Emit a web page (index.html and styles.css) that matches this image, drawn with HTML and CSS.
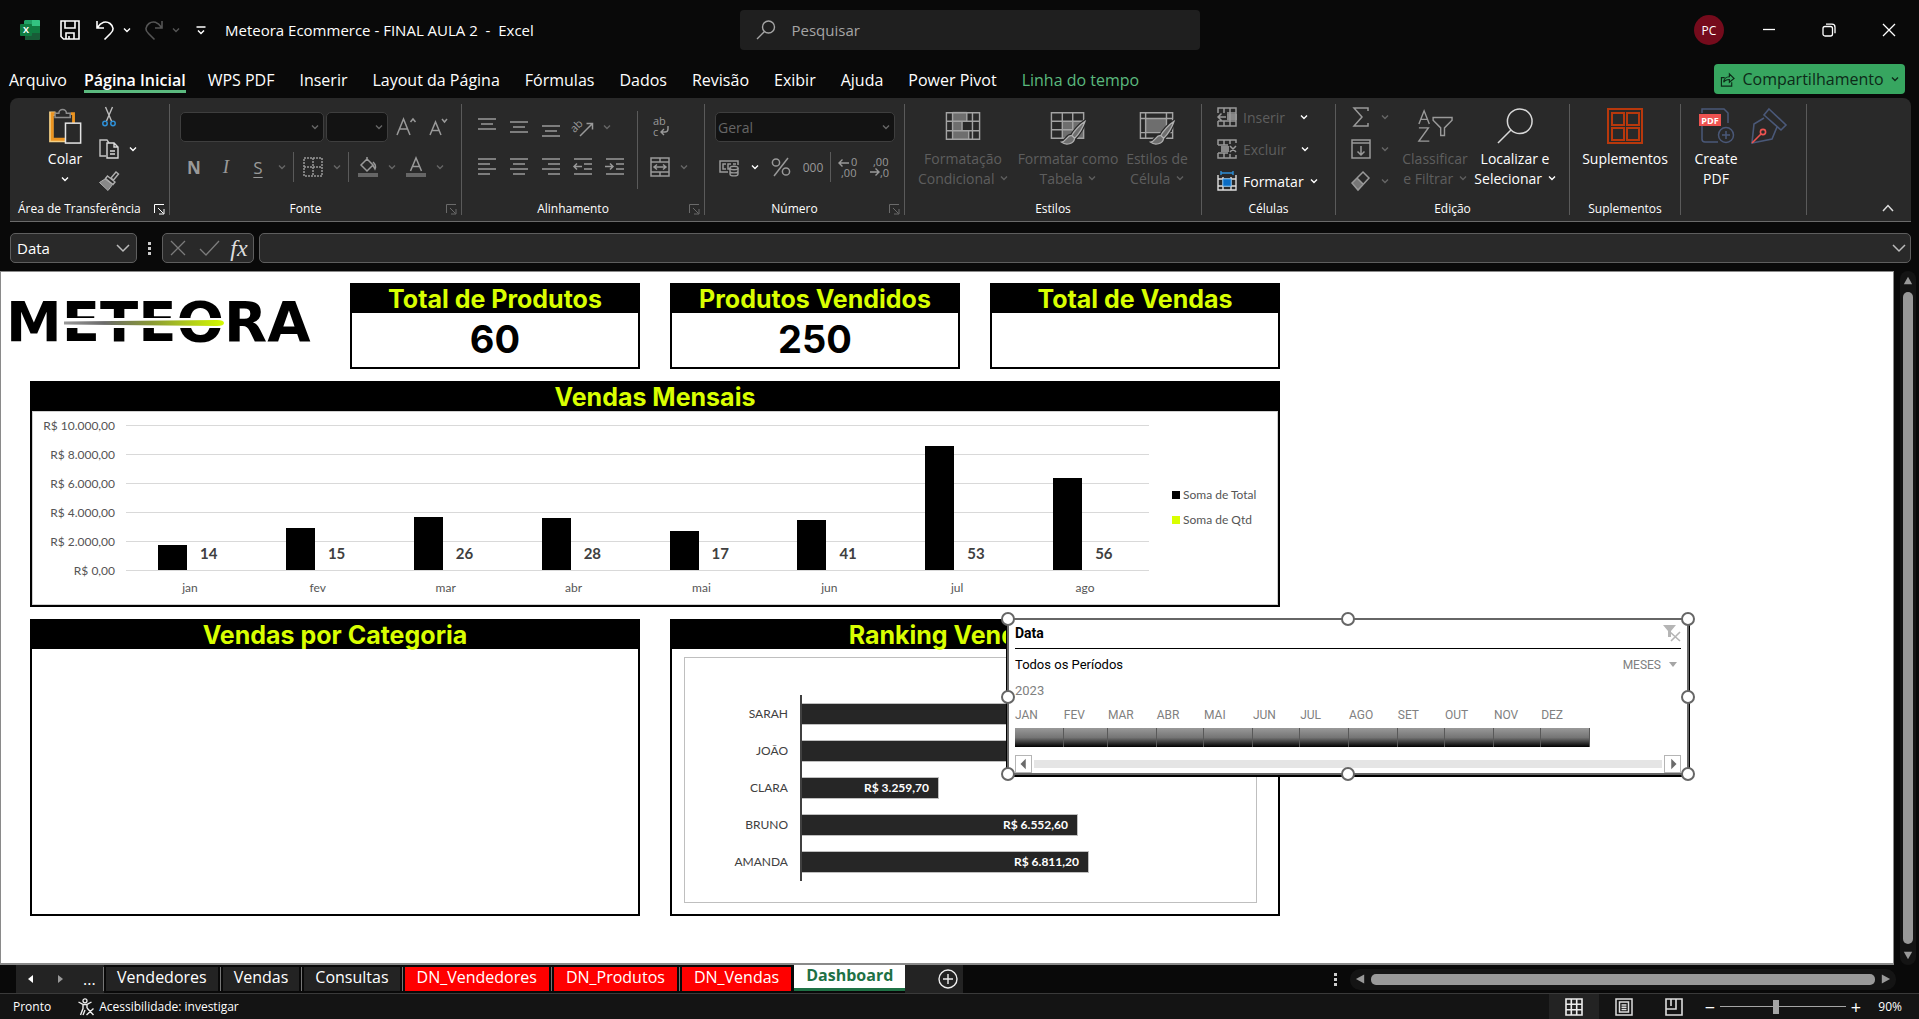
FILE: index.html
```html
<!DOCTYPE html>
<html lang="pt-BR">
<head>
<meta charset="utf-8">
<title>Meteora Ecommerce - FINAL AULA 2 - Excel</title>
<link rel="stylesheet" href="styles.css">
</head>
<body>
<svg class="sprite" aria-hidden="true">
  <symbol id="chev" viewBox="0 0 8 8"><path d="M1 2.500l3 3 3-3" fill="none" stroke="currentColor" stroke-width="1.400"/></symbol>
  <symbol id="chev-lg" viewBox="0 0 14 14"><path d="M1 4l6 6 6-6" fill="none" stroke="currentColor" stroke-width="1.500"/></symbol>
  <symbol id="launcher" viewBox="0 0 11 11"><path d="M.5 9V.5H10M4 4l5.500 5.500M10 5v5H5" fill="none" stroke="currentColor"/></symbol>
</svg>

<header class="titlebar">
  <div class="quick">
    <svg class="excel" viewBox="0 0 20 20" aria-label="Excel"><path d="M5 0h14a1 1 0 0 1 1 1v18a1 1 0 0 1-1 1H5z" fill="#185c37"/><path d="M5 0h8v7H4V1z" fill="#21a366"/><path d="M12 0h7a1 1 0 0 1 1 1v5h-8z" fill="#33c481"/><path d="M12 6h8v7h-8z" fill="#107c41"/><rect y="4" width="12" height="12" rx="1" fill="#107c41"/><text x="6" y="13" text-anchor="middle" class="excel-x">X</text></svg>
    <button class="qbtn save" aria-label="Salvar"><svg viewBox="0 0 20 20"><path d="M1 1h18v18H3.500L1 16.500zM5 1v7h10V1M6 19v-6h8v6M9 19v-3" fill="none" stroke="#fff" stroke-width="1.600"/></svg></button>
    <button class="qbtn" aria-label="Desfazer"><svg viewBox="0 0 20 20"><path d="M2 1v7h7M2.500 7.500C6 2 11 .5 15 3.500s4 7 .5 10L9.500 19.500" fill="none" stroke="#fff" stroke-width="1.600"/></svg></button>
    <button class="drop" aria-label="Opções de desfazer"><svg><use href="#chev"/></svg></button>
    <button class="qbtn off" aria-label="Refazer"><svg viewBox="0 0 20 20"><path d="M18 1v7h-7M17.500 7.500C14 2 9 .5 5 3.500s-4 7-.5 10L10.500 19.500" fill="none" stroke="currentColor" stroke-width="1.600"/></svg></button>
    <button class="drop off" aria-label="Opções de refazer"><svg><use href="#chev"/></svg></button>
    <button class="qbtn custom" aria-label="Personalizar"><svg viewBox="0 0 20 20"><path d="M5.500 7h9M7 10.500l3 3 3-3" fill="none" stroke="#fff" stroke-width="1.500"/></svg></button>
    <span class="doc">Meteora Ecommerce - FINAL AULA 2&nbsp; -&nbsp; Excel</span>
  </div>
  <label class="search"><svg viewBox="0 0 20 20"><path d="M12.500 1a6 6 0 1 1 0 12 6 6 0 0 1 0-12zM8.500 11.500L1 19" fill="none" stroke="#a5a5a5" stroke-width="1.400"/></svg><input type="text" placeholder="Pesquisar" aria-label="Pesquisar"></label>
  <div class="window">
    <button class="avatar" aria-label="Conta">PC</button>
    <button class="win" aria-label="Minimizar"><svg viewBox="0 0 14 14"><path d="M1 6.500h12" stroke="#fff" stroke-width="1.300"/></svg></button>
    <button class="win" aria-label="Restaurar"><svg viewBox="0 0 14 14"><rect x="1" y="3.500" width="9.500" height="9.500" rx="2" fill="none" stroke="#fff" stroke-width="1.300"/><path d="M4 1.200h6a3 3 0 0 1 3 3v6" fill="none" stroke="#fff" stroke-width="1.300"/></svg></button>
    <button class="win" aria-label="Fechar"><svg viewBox="0 0 14 14"><path d="M1 1l12 12M13 1L1 13" stroke="#fff" stroke-width="1.300"/></svg></button>
  </div>
</header>

<nav class="menu">
  <button>Arquivo</button><button class="current">Página Inicial</button><button>WPS PDF</button><button>Inserir</button><button>Layout da Página</button><button>Fórmulas</button><button>Dados</button><button>Revisão</button><button>Exibir</button><button>Ajuda</button><button>Power Pivot</button><button class="context">Linha do tempo</button>
  <button class="share"><svg viewBox="0 0 16 16"><path d="M5 6H1.500v9h11v-4M4 11c0-4 3-6 6-6V2l5 5-5 4V8C7 8 5 9 4 11z" fill="none" stroke="#0d2a18" stroke-width="1.200"/></svg>Compartilhamento<svg class="c"><use href="#chev"/></svg></button>
</nav>

<section class="ribbon" aria-label="Faixa de opções">
  <div class="group g-clip">
    <div class="tools">
      <button class="big paste"><svg viewBox="0 0 36 38"><path d="M8 6H3.500v28H19" fill="none" stroke="#f3cf85" stroke-width="4.500"/><path d="M8 6H4.500v27H19M24 6h3v10" fill="none" stroke="#ec9420" stroke-width="3"/><path d="M7.500 10V5.500h4a4 4 0 0 1 8 0h4V10z" fill="#292929" stroke="#8d8d8d" stroke-width="1.600"/><rect x="18.500" y="16" width="16" height="21" fill="#292929" stroke="#e3e3e3" stroke-width="1.600"/></svg><span>Colar</span><svg class="c"><use href="#chev"/></svg></button>
      <div class="stack">
        <button class="t" aria-label="Recortar"><svg viewBox="0 0 20 20"><path d="M6.500 0l6 14M13.500 0l-6 14" stroke="#bdbdbd" stroke-width="1.400"/><circle cx="6" cy="16.500" r="2.200" fill="none" stroke="#2e8fd6" stroke-width="1.500"/><circle cx="14" cy="16.500" r="2.200" fill="none" stroke="#2e8fd6" stroke-width="1.500"/></svg></button>
        <div class="row"><button class="t" aria-label="Copiar"><svg viewBox="0 0 20 20"><path d="M7 17H1V1h7l2 3" fill="none" stroke="#c4c4c4" stroke-width="1.400"/><path d="M8 4h7l4 4v11H8zM15 4v4h4M11 12h5M11 15h5" fill="none" stroke="#d8d8d8" stroke-width="1.400"/></svg></button><button class="drop" aria-label="Opções de copiar"><svg><use href="#chev"/></svg></button></div>
        <button class="t" aria-label="Pincel de Formatação"><svg viewBox="0 0 20 20"><path d="M12 7l5-6 2.500 2-5 6z" fill="none" stroke="#b0b0b0" stroke-width="1.400"/><path d="M8.500 5l7.500 6-2 2.500L6.500 7.500z" fill="#292929" stroke="#b0b0b0" stroke-width="1.400"/><path d="M6 8l-5.500 3.500L9 19.500l4.500-6z" fill="#888" stroke="#b0b0b0"/></svg></button>
      </div>
    </div>
    <div class="caption">Área de Transferência<button class="launch on" aria-label="Abrir Área de Transferência"><svg><use href="#launcher"/></svg></button></div>
  </div>

  <div class="group g-font off">
    <div class="tools lines">
      <div class="row">
        <span class="combo font-name"><select aria-label="Fonte"><option></option></select><svg><use href="#chev"/></svg></span>
        <span class="combo font-size"><select aria-label="Tamanho"><option></option></select><svg><use href="#chev"/></svg></span>
        <button class="t" aria-label="Aumentar fonte"><svg viewBox="0 0 20 20"><path d="M1 18L7.500 2 14 18M3.500 12h8M14.500 5l2.500-3 2.500 3" fill="none" stroke="currentColor" stroke-width="1.500"/></svg></button>
        <button class="t" aria-label="Diminuir fonte"><svg viewBox="0 0 20 20"><path d="M2 18L7.500 5 13 18M4 13.500h7M14 2l2.500 3L19 2" fill="none" stroke="currentColor" stroke-width="1.500"/></svg></button>
      </div>
      <div class="row">
        <button class="t ltr b">N</button><button class="t ltr i">I</button><button class="t ltr u">S</button><button class="drop" aria-label="Sublinhado"><svg><use href="#chev"/></svg></button><i class="sep"></i>
        <button class="t" aria-label="Bordas"><svg viewBox="0 0 20 20"><path d="M1 1h18v18H1zM10 1v18M1 10h18" fill="none" stroke="currentColor" stroke-width="1.500" stroke-dasharray="2 1"/></svg></button><button class="drop" aria-label="Opções de bordas"><svg><use href="#chev"/></svg></button><i class="sep"></i>
        <button class="t" aria-label="Cor de Preenchimento"><svg viewBox="0 0 20 20"><path d="M9 2l6 6-6 6-6-6zM9 2V0M15 5c2 2 3 5 2 7-1-2-2-3-2-4" fill="none" stroke="currentColor" stroke-width="1.500"/><path d="M0 16h20v4H0z" fill="#666"/></svg></button><button class="drop" aria-label="Opções de preenchimento"><svg><use href="#chev"/></svg></button>
        <button class="t" aria-label="Cor da Fonte"><svg viewBox="0 0 20 20"><path d="M4.500 14L10 1l5.500 13M6.500 9.500h7" fill="none" stroke="currentColor" stroke-width="1.500"/><path d="M0 16h20v4H0z" fill="#666"/></svg></button><button class="drop" aria-label="Opções de cor"><svg><use href="#chev"/></svg></button>
      </div>
    </div>
    <div class="caption">Fonte<button class="launch" aria-label="Abrir Fonte"><svg><use href="#launcher"/></svg></button></div>
  </div>

  <div class="group g-align off">
    <div class="tools">
      <div class="lines">
        <div class="row">
          <button class="t" aria-label="Alinhar em Cima"><svg viewBox="0 0 20 20"><path d="M1 2h18M4 7h12M1 12h18" stroke="currentColor" stroke-width="1.500"/></svg></button>
          <button class="t" aria-label="Alinhar no Meio"><svg viewBox="0 0 20 20"><path d="M1 5h18M4 10h12M1 15h18" stroke="currentColor" stroke-width="1.500"/></svg></button>
          <button class="t" aria-label="Alinhar Embaixo"><svg viewBox="0 0 20 20"><path d="M1 9h18M4 14h12M1 19h18" stroke="currentColor" stroke-width="1.500"/></svg></button>
          <button class="t" aria-label="Orientação"><svg viewBox="0 0 20 20"><text x="-2" y="12" transform="rotate(-45 5 10)" class="ic-txt">ab</text><path d="M7 19L19 7M13.500 6.500H19.500v6" fill="none" stroke="currentColor" stroke-width="1.500"/></svg></button><button class="drop" aria-label="Opções de orientação"><svg><use href="#chev"/></svg></button>
        </div>
        <div class="row">
          <button class="t" aria-label="Alinhar à Esquerda"><svg viewBox="0 0 20 20"><path d="M1 2h18M1 7h12M1 12h18M1 17h12" stroke="currentColor" stroke-width="1.500"/></svg></button>
          <button class="t" aria-label="Centralizar"><svg viewBox="0 0 20 20"><path d="M1 2h18M4 7h12M1 12h18M4 17h12" stroke="currentColor" stroke-width="1.500"/></svg></button>
          <button class="t" aria-label="Alinhar à Direita"><svg viewBox="0 0 20 20"><path d="M1 2h18M7 7h12M1 12h18M7 17h12" stroke="currentColor" stroke-width="1.500"/></svg></button>
          <button class="t" aria-label="Diminuir Recuo"><svg viewBox="0 0 20 20"><path d="M1 2h18M11 7h8M11 12h8M1 17h18M9 9.500H1M4 6.500l-3 3 3 3" fill="none" stroke="currentColor" stroke-width="1.500"/></svg></button>
          <button class="t" aria-label="Aumentar Recuo"><svg viewBox="0 0 20 20"><path d="M1 2h18M11 7h8M11 12h8M1 17h18M0 9.500h8M5 6.500l3 3-3 3" fill="none" stroke="currentColor" stroke-width="1.500"/></svg></button>
        </div>
      </div>
      <i class="sep tall"></i>
      <div class="lines">
        <div class="row"><button class="t" aria-label="Quebrar Texto Automaticamente"><svg viewBox="0 0 20 20"><text x="3" y="8" class="ic-txt">ab</text><text x="3" y="19" class="ic-txt">c</text><path d="M18 9v3q0 3-3 3h-4M14 12l-3 3 3 3" fill="none" stroke="currentColor" stroke-width="1.400"/></svg></button></div>
        <div class="row"><button class="t" aria-label="Mesclar e Centralizar"><svg viewBox="0 0 20 20"><path d="M1 1h18v18H1zM1 5h18M1 15h18M10 1v4M10 15v4M4 10h12M7 7.500L4 10l3 2.500M13 7.500l3 2.500-3 2.500" fill="none" stroke="currentColor" stroke-width="1.500"/></svg></button><button class="drop" aria-label="Opções de mesclar"><svg><use href="#chev"/></svg></button></div>
      </div>
    </div>
    <div class="caption">Alinhamento<button class="launch" aria-label="Abrir Alinhamento"><svg><use href="#launcher"/></svg></button></div>
  </div>

  <div class="group g-num off">
    <div class="tools lines">
      <div class="row"><span class="combo format"><select aria-label="Formato de Número"><option>Geral</option></select><svg><use href="#chev"/></svg></span></div>
      <div class="row">
        <button class="t" aria-label="Formato de Contabilização"><svg viewBox="0 0 20 20"><path d="M9 15H1V4h18v4M7 7H4v5h3M12 7H9v5h2M14 7h3" fill="none" stroke="currentColor" stroke-width="1.500"/><path d="M11 11v6c0 2.500 8 2.500 8 0v-6M11 14c0 2.500 8 2.500 8 0" fill="#292929" stroke="currentColor" stroke-width="1.400"/><ellipse cx="15" cy="11" rx="4" ry="1.800" fill="#292929" stroke="currentColor" stroke-width="1.400"/></svg></button><button class="drop on" aria-label="Opções de moeda"><svg><use href="#chev"/></svg></button>
        <button class="t" aria-label="Porcentagem"><svg viewBox="0 0 20 20"><path d="M17 1L3 19" stroke="currentColor" stroke-width="1.500"/><circle cx="5" cy="5.500" r="3.600" fill="none" stroke="currentColor" stroke-width="1.500"/><circle cx="15" cy="14.500" r="3.600" fill="none" stroke="currentColor" stroke-width="1.500"/></svg></button>
        <button class="t zeros">000</button><i class="sep"></i>
        <button class="t" aria-label="Aumentar Casas Decimais"><svg viewBox="0 0 20 20"><path d="M11 6H1M4.500 2.500L1 6l3.500 3.500" fill="none" stroke="currentColor" stroke-width="1.400"/><text x="13" y="9" class="ic-num">0</text><text x="3" y="20" class="ic-num">,00</text></svg></button>
        <button class="t" aria-label="Diminuir Casas Decimais"><svg viewBox="0 0 20 20"><text x="3" y="9" class="ic-num">,00</text><path d="M0 15h9M5.500 11.500L9 15l-3.500 3.500" fill="none" stroke="currentColor" stroke-width="1.400"/><text x="10" y="20" class="ic-num">,0</text></svg></button>
      </div>
    </div>
    <div class="caption">Número<button class="launch" aria-label="Abrir Número"><svg><use href="#launcher"/></svg></button></div>
  </div>

  <div class="group g-style off">
    <div class="tools">
      <button class="big dim"><svg viewBox="0 0 38 36"><path d="M8 3h15v10H8zM8 13h10v10H8zM8 23h17v9H8z" fill="#6e6e6e"/><path d="M1.500 4h35v28h-35zM8 4v28M29 4v28M1.500 13h35M1.500 23h35M23 4v9M18 13v10M25 23v9" fill="none" stroke="#a3a3a3" stroke-width="1.500"/></svg><span>Formatação<br>Condicional <svg class="c"><use href="#chev"/></svg></span></button>
      <button class="big dim mid"><svg viewBox="0 0 38 36"><path d="M13 13h22v18H13z" fill="#6e6e6e"/><path d="M1.500 4h34v27h-34zM1.500 13h34M1.500 22h34M13 4v27M24 4v27" fill="none" stroke="#a3a3a3" stroke-width="1.500"/><path d="M37 13c-5 3-12 11-14 15l3 3c4-4 9-12 11-18zM23 28c-6 0-5 6-11 7 5 4 13 2 14-4z" fill="#6e6e6e" stroke="#292929" stroke-width="4"/><path d="M37 13c-5 3-12 11-14 15l3 3c4-4 9-12 11-18zM23 28c-6 0-5 6-11 7 5 4 13 2 14-4z" fill="#6e6e6e" stroke="#b0b0b0" stroke-width="1.300"/></svg><span>Formatar como<br>Tabela <svg class="c"><use href="#chev"/></svg></span></button>
      <button class="big dim narrow"><svg viewBox="0 0 38 36"><path d="M7 10h22v15H7z" fill="#6e6e6e"/><path d="M1.500 4h34v27h-34zM1.500 10h34M1.500 25h34M7 4v27M29 4v27" fill="none" stroke="#a3a3a3" stroke-width="1.500"/><path d="M37 13c-5 3-12 11-14 15l3 3c4-4 9-12 11-18zM23 28c-6 0-5 6-11 7 5 4 13 2 14-4z" fill="#6e6e6e" stroke="#292929" stroke-width="4"/><path d="M37 13c-5 3-12 11-14 15l3 3c4-4 9-12 11-18zM23 28c-6 0-5 6-11 7 5 4 13 2 14-4z" fill="#6e6e6e" stroke="#b0b0b0" stroke-width="1.300"/></svg><span>Estilos de<br>Célula <svg class="c"><use href="#chev"/></svg></span></button>
    </div>
    <div class="caption">Estilos</div>
  </div>

  <div class="group g-cells">
    <div class="tools stack">
      <button class="line dim"><svg viewBox="0 0 20 20"><path d="M10 7h10v6H10z" fill="#888"/><path d="M1 6V1h18v18H1v-5M7 1v5M13 1v18M7 14v5M1 14h18M10 6h9M9 10H1M4.500 6.500L1 10l3.500 3.500" fill="none" stroke="#999" stroke-width="1.500"/></svg>Inserir<svg class="c on far"><use href="#chev"/></svg></button>
      <button class="line dim"><svg viewBox="0 0 20 20"><path d="M4 7h8v6H4z" fill="#888"/><path d="M1 6V1h18v3M1 14v5h18v-3M7 1v5M13 1v4M7 14v5M13 15v4M1 6h10M1 14h10M13 7l6 6M19 7l-6 6" fill="none" stroke="#999" stroke-width="1.500"/></svg>Excluir<svg class="c on far"><use href="#chev"/></svg></button>
      <button class="line"><svg viewBox="0 0 20 20"><path d="M4 0v4M16 0v4M4 2h12" stroke="#2e8fd6" stroke-width="1.400"/><path d="M1 4v15h18V4M1 8h18M1 15h18M6 6v13M14 6v13" fill="none" stroke="#ddd" stroke-width="1.400"/><path d="M6 8h8v7H6z" fill="#0a6cc4" stroke="#4aa3e8"/></svg>Formatar<svg class="c"><use href="#chev"/></svg></button>
    </div>
    <div class="caption">Células</div>
  </div>

  <div class="group g-edit">
    <div class="tools">
      <div class="stack off">
        <div class="row"><button class="t" aria-label="Soma"><svg viewBox="0 0 20 20"><path d="M17 4V1H3l8 9-8 9h14v-3" fill="none" stroke="currentColor" stroke-width="1.500"/></svg></button><button class="drop" aria-label="Opções de soma"><svg><use href="#chev"/></svg></button></div>
        <div class="row"><button class="t" aria-label="Preencher"><svg viewBox="0 0 20 20"><path d="M1 1h18v18H1zM1 4h18M10 7v9M6.500 12.500L10 16l3.500-3.500" fill="none" stroke="currentColor" stroke-width="1.500"/></svg></button><button class="drop" aria-label="Opções de preencher"><svg><use href="#chev"/></svg></button></div>
        <div class="row"><button class="t" aria-label="Limpar"><svg viewBox="0 0 20 20"><path d="M1 12l5-5 6 6-5 6z" fill="#777"/><path d="M12 1l6 6-11 12-6-7zM6 7l6 6" fill="none" stroke="currentColor" stroke-width="1.500"/></svg></button><button class="drop" aria-label="Opções de limpar"><svg><use href="#chev"/></svg></button></div>
      </div>
      <button class="big dim sort"><svg viewBox="0 0 38 36"><path d="M2 16L7.500 2 13 16M4 11h7M2 20h10L2 34h11M17 9h20v3l-8 8v8h-4v-8l-8-8z" fill="none" stroke="#999" stroke-width="1.500"/></svg><span>Classificar<br>e Filtrar <svg class="c"><use href="#chev"/></svg></span></button>
      <button class="big find"><svg viewBox="0 0 38 38"><circle cx="24" cy="14" r="13" fill="none" stroke="#d8d8d8" stroke-width="1.600"/><path d="M15 23L1 37" stroke="#d8d8d8" stroke-width="1.600"/></svg><span>Localizar e<br>Selecionar <svg class="c"><use href="#chev"/></svg></span></button>
    </div>
    <div class="caption">Edição</div>
  </div>

  <div class="group g-add">
    <div class="tools"><button class="big addin"><svg viewBox="0 0 36 36"><path d="M1 1h34v34H1zM5 5h12v12H5zM20 5h12v12H20zM5 20h12v12H5zM20 20h12v12H20z" fill="none" stroke="#b8380c" stroke-width="2"/></svg><span>Suplementos</span></button></div>
    <div class="caption">Suplementos</div>
  </div>

  <div class="group g-pdf">
    <div class="tools">
      <button class="big pdf"><svg viewBox="0 0 36 36"><path d="M4 5V1h22l4 4v10M4 18v13a3 3 0 0 0 3 3h13" fill="none" stroke="#4a5878" stroke-width="1.500"/><circle cx="28" cy="27" r="7.500" fill="none" stroke="#4a5878" stroke-width="1.500"/><path d="M28 23v8M24 27h8" stroke="#4a5878" stroke-width="1.500"/><path d="M1 6h22v12H1z" fill="#ee5350"/><text x="12" y="16" text-anchor="middle" class="pdf-txt">PDF</text></svg><span>Create<br>PDF</span></button>
      <button class="big pen" aria-label="Assinar PDF"><svg viewBox="0 0 36 36"><path d="M18 1l17 16-5 5L13 7zM13 10L3 16 1 35l20-4 5-12" fill="none" stroke="#4a5878" stroke-width="1.600"/><path d="M1 35l9-9" stroke="#ee5350" stroke-width="1.600"/><circle cx="12" cy="24" r="2.600" fill="none" stroke="#ee5350" stroke-width="1.600"/></svg></button>
    </div>
  </div>
  <button class="collapse" aria-label="Recolher a Faixa de Opções"><svg viewBox="0 0 14 14"><path d="M2 10l5-5.500 5 5.500" fill="none" stroke="#ddd" stroke-width="1.500"/></svg></button>
</section>

<section class="formula">
  <span class="namebox"><input type="text" value="Data" aria-label="Caixa de Nome"><svg><use href="#chev-lg"/></svg></span>
  <i class="dots"></i>
  <div class="fx"><button aria-label="Cancelar"><svg viewBox="0 0 20 20"><path d="M3 3l14 14M17 3L3 17" stroke="#7c7c7c" stroke-width="1.300"/></svg></button><button aria-label="Inserir"><svg viewBox="0 0 20 20"><path d="M1 11l6 6L20 3" fill="none" stroke="#7c7c7c" stroke-width="1.300"/></svg></button><button class="f" aria-label="Inserir Função">fx</button></div>
  <span class="formula-in"><input type="text" aria-label="Barra de fórmulas"><svg><use href="#chev-lg"/></svg></span>
</section>

<div class="work">
  <main class="sheet">
    <div class="dash">
      <div class="logo"><span>METEORA</span><svg viewBox="0 0 184 20" preserveAspectRatio="none"><defs><linearGradient id="comet"><stop offset="0" stop-color="#999"/><stop offset=".25" stop-color="#6a6a6a"/><stop offset=".55" stop-color="#8a9a35"/><stop offset="1" stop-color="#d4fa00"/></linearGradient></defs><path d="M0 5h184v10H0z" fill="#fff"/><path d="M0 8.500L176 7q8 0 8 3t-8 3L0 11.500z" fill="url(#comet)"/></svg></div>
      <section class="card kpi"><h2>Total de Produtos</h2><p>60</p></section>
      <section class="card kpi"><h2>Produtos Vendidos</h2><p>250</p></section>
      <section class="card kpi"><h2>Total de Vendas</h2><p></p></section>

      <section class="card monthly">
        <h2>Vendas Mensais</h2>
        <div class="mchart">
          <div class="yaxis"><span>R$ 10.000,00</span><span>R$ 8.000,00</span><span>R$ 6.000,00</span><span>R$ 4.000,00</span><span>R$ 2.000,00</span><span>R$ 0,00</span></div>
          <div class="plot">
            <div class="cols">
              <div class="col"><i style="height:25px"></i><b>14</b></div>
              <div class="col"><i style="height:42px"></i><b>15</b></div>
              <div class="col"><i style="height:53px"></i><b>26</b></div>
              <div class="col"><i style="height:52px"></i><b>28</b></div>
              <div class="col"><i style="height:39px"></i><b>17</b></div>
              <div class="col"><i style="height:50px"></i><b>41</b></div>
              <div class="col"><i style="height:124px"></i><b>53</b></div>
              <div class="col"><i style="height:92px"></i><b>56</b></div>
            </div>
            <div class="xaxis"><span>jan</span><span>fev</span><span>mar</span><span>abr</span><span>mai</span><span>jun</span><span>jul</span><span>ago</span></div>
          </div>
          <div class="legend"><span class="k">Soma de Total</span><span class="l">Soma de Qtd</span></div>
        </div>
      </section>

      <section class="card half"><h2>Vendas por Categoria</h2></section>
      <section class="card half ranking">
        <h2>Ranking Vendedores</h2>
        <div class="rchart">
          <div class="names"><span>SARAH</span><span>JOÃO</span><span>CLARA</span><span>BRUNO</span><span>AMANDA</span></div>
          <div class="bars">
            <div><i style="width:340px"></i></div>
            <div><i style="width:300px"></i></div>
            <div><i style="width:137px">R$ 3.259,70</i></div>
            <div><i style="width:276px">R$ 6.552,60</i></div>
            <div><i style="width:287px">R$ 6.811,20</i></div>
          </div>
        </div>
      </section>

      <section class="slicer" aria-label="Linha do tempo Data">
        <div class="s-head"><b>Data</b><button aria-label="Limpar Filtro"><svg viewBox="0 0 18 18"><path d="M0 1h13L8 7v6H5V7z" fill="#b5b5b5"/><path d="M7 8l10 9M17 8l-9 9" stroke="#b5b5b5" stroke-width="1.600"/></svg></button></div>
        <div class="s-period"><span>Todos os Períodos</span><button>MESES<i></i></button></div>
        <div class="s-year">2023</div>
        <div class="months"><button>JAN</button><button>FEV</button><button>MAR</button><button>ABR</button><button>MAI</button><button>JUN</button><button>JUL</button><button>AGO</button><button>SET</button><button>OUT</button><button>NOV</button><button>DEZ</button></div>
        <div class="s-scroll"><button aria-label="Anterior"><svg viewBox="0 0 16 16"><path d="M10 2v12L4 8z" fill="#6a6a6a"/></svg></button><i></i><button aria-label="Próximo"><svg viewBox="0 0 16 16"><path d="M6 2v12l6-6z" fill="#6a6a6a"/></svg></button></div>
        <i class="h tl"></i><i class="h tc"></i><i class="h tr"></i><i class="h ml"></i><i class="h mr"></i><i class="h bl"></i><i class="h bc"></i><i class="h br"></i>
      </section>
    </div>
  </main>
  <div class="vscroll"><svg viewBox="0 0 12 12"><path d="M6 1l5 9H1z" fill="#999"/></svg><i></i><svg viewBox="0 0 12 12"><path d="M6 11l5-9H1z" fill="#999"/></svg></div>
</div>

<div class="tabs">
  <div class="tabnav"><button aria-label="Folha anterior"><svg viewBox="0 0 10 10"><path d="M7 1v8L2 5z" fill="#fff"/></svg></button><button aria-label="Próxima folha"><svg viewBox="0 0 10 10"><path d="M3 1v8l5-4z" fill="#999"/></svg></button><button>...</button></div>
  <button class="tab">Vendedores</button><button class="tab">Vendas</button><button class="tab">Consultas</button><button class="tab red">DN_Vendedores</button><button class="tab red">DN_Produtos</button><button class="tab red">DN_Vendas</button><button class="tab active">Dashboard</button>
  <button class="add" aria-label="Nova planilha"><svg viewBox="0 0 20 20"><circle cx="10" cy="10" r="9" fill="none" stroke="#eee" stroke-width="1.400"/><path d="M10 5v10M5 10h10" stroke="#eee" stroke-width="1.400"/></svg></button>
  <i class="dots"></i>
  <div class="hscroll"><svg viewBox="0 0 12 12"><path d="M1 6l9-5v10z" fill="#999"/></svg><i></i><svg viewBox="0 0 12 12"><path d="M11 6L2 1v10z" fill="#999"/></svg></div>
</div>

<footer class="status">
  <span>Pronto</span>
  <button class="access"><svg viewBox="0 0 18 18"><circle cx="8" cy="2.800" r="2" fill="none" stroke="#eee" stroke-width="1.300"/><path d="M1.500 4l4.500 2.500v4L3.500 17M14.500 4L10 6.500V10M6 6.500h4M6 17l2-5M10 10l6.500 7M16.500 10.500L9.500 17" fill="none" stroke="#eee" stroke-width="1.400"/></svg>Acessibilidade: investigar</button>
  <div class="views">
    <button class="sel" aria-label="Normal"><svg viewBox="0 0 18 18"><path d="M1 1h16v16H1zM6.300 1v16M11.700 1v16M1 6.300h16M1 11.700h16" fill="none" stroke="#eee" stroke-width="1.600"/></svg></button>
    <button aria-label="Layout da Página"><svg viewBox="0 0 18 18"><path d="M1 1h16v16H1zM4.500 4h9v10h-9zM6.500 7h5M6.500 9.300h5M6.500 11.500h5" fill="none" stroke="#ddd" stroke-width="1.500"/></svg></button>
    <button aria-label="Quebra de Página"><svg viewBox="0 0 18 18"><path d="M1 1h16v16H1zM1 11h10V1M6 1v7" fill="none" stroke="#ddd" stroke-width="1.600"/></svg></button>
  </div>
  <button class="z" aria-label="Reduzir">−</button><input class="zoom" type="range" min="10" max="190" value="90" aria-label="Zoom"><button class="z" aria-label="Ampliar">+</button><span class="pct">90%</span>
</footer>
</body>
</html>
```

FILE: styles.css
```css
* { box-sizing: border-box; }
body { margin: 0; min-height: 100vh; display: flex; flex-direction: column; background: #090909; color: #fff; font-family: "Open Sans", "Noto Sans", sans-serif; font-size: 14px; overflow: hidden; }
button, input, select { font: inherit; color: inherit; background: none; border: 0; padding: 0; margin: 0; outline: 0; }
button { display: flex; align-items: center; justify-content: center; white-space: nowrap; }
h2, p { margin: 0; }
svg { flex: none; display: block; overflow: visible; }
.sprite { position: absolute; width: 0; height: 0; }

/* title bar */
.titlebar { height: 60px; display: grid; grid-template-columns: 1fr 460px 1fr; align-items: center; padding-left: 20px; }
.quick { display: flex; align-items: center; }
.excel { width: 20px; height: 20px; margin-right: 20px; }
.excel-x { font: 700 9px "Open Sans", sans-serif; fill: #fff; }
.qbtn { width: 20px; height: 20px; }
.qbtn svg { width: 20px; height: 20px; }
.save { margin-right: 15px; }
.drop { width: 16px; height: 24px; }
.drop svg, svg.c { width: 8px; height: 8px; }
.quick .drop { margin: 0 9px 0 4px; }
.quick .off { color: #555; }
.quick .custom { margin: 0 14px 0 -2px; }
.doc { font-size: 15px; white-space: nowrap; }
.search { height: 40px; background: #1f1f1f; border-radius: 4px; display: flex; align-items: center; gap: 16px; padding-left: 16px; }
.search svg { width: 20px; height: 20px; }
.search input { flex: 1; font-size: 15px; }
.search input::placeholder { color: #a5a5a5; opacity: 1; }
.window { display: flex; justify-content: flex-end; align-items: center; }
.avatar { width: 30px; height: 30px; border-radius: 50%; background: #750b1c; font-size: 12px; margin-right: 15px; }
.win { width: 60px; height: 40px; }
.win svg { width: 14px; height: 14px; }

/* menu */
.menu { height: 38px; display: flex; align-items: center; gap: 25px; padding: 0 14px 0 9px; font-size: 16px; }
.menu button { height: 28px; padding-top: 4px; border-bottom: 3px solid transparent; }
.menu .current { font-weight: 600; border-color: #5bb97e; margin: 0 -3px 0 -8px; }
.menu .context { color: #5bb97e; }
.menu .share { margin-left: auto; width: 191px; height: 30px; background: #37a660; color: #0d2a18; border: 0; border-radius: 4px; gap: 5px; padding: 0 6px; justify-content: space-between; }
.share svg { width: 15px; height: 15px; }
.share svg.c { width: 8px; height: 8px; }

/* ribbon */
.ribbon { margin: 0 8px 0 10px; height: 124px; background: #292929; border-bottom: 1px solid #6a6a6a; border-radius: 8px 8px 0 0; display: flex; padding: 6px 0; }
.group { display: flex; flex-direction: column; justify-content: space-between; border-right: 1px solid #5a5a5a; flex: none; }
.tools { display: flex; height: 92px; }
.caption { font-size: 12px; line-height: 12px; height: 12px; text-align: center; position: relative; }
.launch { position: absolute; right: 4px; top: 1px; color: #6a6a6a; }
.launch svg { width: 11px; height: 11px; }
.on { color: #fff; }
.g-clip .caption { text-align: left; padding-left: 8px; }
.off { color: #999; }
.off .drop, .off .combo svg { color: #666; }
.off .drop.on { color: #fff; }
.off .caption { color: #fff; }
.g-font .caption, .g-align .caption, .g-num .caption { padding-right: 20px; }
.row { display: flex; align-items: center; }
.lines { display: flex; flex-direction: column; gap: 8px; padding-top: 7px; }
.lines .row { height: 32px; }
.t { width: 32px; height: 24px; flex: none; }
.t svg { width: 20px; height: 20px; }
.sep { width: 1px; height: 30px; background: #5a5a5a; margin: 0 3px; flex: none; }
.tall { height: 78px; margin: 7px 6px 0 0; }
.stack { display: flex; flex-direction: column; gap: 8px; padding-top: 1px; }
.big { flex-direction: column; justify-content: flex-start; line-height: 20px; padding-top: 4px; }
.big > svg:first-child { width: 36px; height: 36px; margin-bottom: 5px; }
.big svg.c, .line svg.c { display: inline-block; vertical-align: 2px; margin-left: 2px; }
.dim { color: #5e5e5e; }
.line { height: 24px; justify-content: flex-start; gap: 6px; }
.line svg:first-child { width: 20px; height: 20px; }
.line svg.c { margin-left: 0; }
.line svg.far { margin-left: 9px; }

.g-clip { width: 160px; }
.g-clip .paste { width: 48px; margin: 0 4px 0 31px; }
.g-clip .paste > svg.c { margin: 6px 0 0; }
.g-font { width: 292px; }
.g-font .row { padding-left: 8px; }
.g-align { width: 243px; }
.g-align .tools { padding-left: 9px; }
.g-align .lines:first-child { width: 166px; }
.g-num { width: 200px; }
.g-num .row { padding-left: 8px; }
.g-num .drop { width: 20px; }
.g-num .sep { margin: 0 1px; }
.g-style { width: 297px; }
.g-style .big { width: 108px; }
.g-style .tools { padding-left: 4px; }
.g-style .mid { width: 102px; }
.g-style .narrow { width: 76px; }
.g-cells { width: 134px; }
.g-cells .tools { padding-left: 15px; }
.g-edit { width: 234px; }
.g-edit .tools { padding-left: 9px; }
.sort { width: 80px; margin-left: 2px; }
.g-edit .find { width: 80px; }
.g-add { width: 111px; }
.addin { width: 110px; }
.g-pdf { width: 126px; }
.pdf { width: 70px; }
.collapse { margin: auto 16px 0 auto; width: 14px; height: 14px; }
.collapse svg { width: 14px; height: 14px; }

.combo { display: flex; align-items: center; height: 30px; background: #131313; border: 1px solid #3e3e3e; border-radius: 5px; padding-right: 4px; }
.combo select { flex: 1; min-width: 0; appearance: none; padding-left: 2px; color: #666; opacity: 1; }
.combo svg { width: 8px; height: 8px; pointer-events: none; }
.font-name { width: 144px; margin: 0 2px; }
.font-size { width: 62px; margin-right: 2px; }
.format { width: 180px; margin-left: 2px; }
.ltr { font-size: 17px; }
.b { font-weight: 700; }
.i { font-family: "Liberation Serif", serif; font-style: italic; font-size: 19px; }
.u { text-decoration: underline; text-underline-offset: 3px; }
.zeros { font-size: 12px; }
.ic-txt { font: 11px "Open Sans", sans-serif; fill: currentColor; }
.ic-num { font: 11px "Open Sans", sans-serif; fill: currentColor; }
.pdf-txt { font: 700 9px "Open Sans", sans-serif; fill: #fff; }

/* formula bar */
.formula { display: flex; align-items: center; padding: 11px 8px 8px 10px; }
.namebox, .fx, .formula-in { height: 30px; border: 1px solid #5e5e5e; border-radius: 5px; background: #292929; display: flex; align-items: center; }
.formula svg { width: 14px; height: 14px; color: #bbb; }
.namebox { width: 127px; padding: 0 6px; font-size: 15px; }
.namebox input { flex: 1; min-width: 0; }
.dots { width: 3px; height: 13px; margin: 0 11px; background: repeating-linear-gradient(#ccc 0 3px, transparent 3px 5px); }
.fx { width: 92px; justify-content: space-around; }
.formula .fx svg { width: 20px; height: 20px; }
.fx .f { font: italic 24px "Liberation Serif", serif; color: #ddd; }
.formula-in { flex: 1; margin-left: 5px; padding: 0 4px; }
.formula-in input { flex: 1; }

/* worksheet */
.work { flex: 1; display: flex; min-height: 0; }
.sheet { flex: 1; background: #fff; color: #000; border: 1px solid #8a8a8a; border-bottom-width: 2px; }
.dash { position: relative; width: 1250px; margin-left: 29px; padding-top: 11px; display: grid; grid-template-columns: 290px 290px 290px 290px; column-gap: 30px; row-gap: 12px; }
.logo { position: relative; margin: 16px 0 0 -24px; font: 700 56px/46px "DejaVu Sans", sans-serif; }
.logo svg { position: absolute; left: 58px; top: 14px; width: 160px; height: 20px; }
.card { border: 2px solid #000; }
.card h2 { background: #000; color: #d9ff00; text-align: center; font: 700 25px/28px Inter, sans-serif; height: 28px; }
.kpi { height: 86px; }
.kpi p { text-align: center; font: 700 38px/53px Inter, sans-serif; }
.monthly { grid-column: 1 / 5; height: 226px; }
.half { grid-column: span 2; height: 297px; }

.mchart { display: flex; height: 194px; border: 1px solid #d0d0d0; font: 12px Lato, sans-serif; color: #555; }
.yaxis { width: 82px; display: flex; flex-direction: column; text-align: right; line-height: 29px; margin-top: -1px; }
.plot { flex: 1; margin: 13px 0 0 11px; }
.cols { height: 146px; display: flex; background: repeating-linear-gradient(#d9d9d9 0 1px, transparent 1px 29px); }
.col { flex: 1; display: flex; align-items: flex-end; gap: 13px; padding: 0 0 1px 32px; }
.col i { width: 29px; background: #000; }
.col b { font: 700 15px/20px Lato, sans-serif; color: #404040; margin-bottom: 7px; }
.xaxis { display: flex; line-height: 34px; }
.xaxis span { flex: 1; text-align: center; }
.legend { width: 128px; padding: 70px 0 0 23px; display: flex; flex-direction: column; }
.legend span { line-height: 25px; display: flex; align-items: center; gap: 3px; white-space: nowrap; }
.legend span::before { content: ""; width: 8px; height: 8px; background: #000; }
.legend .l::before { background: #d9ff00; }

.rchart { margin: 8px 21px 0 12px; height: 246px; border: 1px solid #bfbfbf; padding: 37px 0 0; display: flex; }
.names { width: 103px; text-align: right; font: 12px/37px Lato, sans-serif; color: #404040; display: flex; flex-direction: column; }
.bars { margin-left: 12px; border-left: 2px solid #404040; height: 186px; }
.bars div { height: 37px; display: flex; align-items: center; }
.bars i { height: 22px; background: #262626; border: 1px solid #bfbfbf; border-left: 0; color: #fff; font: 700 12px/20px Lato, sans-serif; text-align: right; padding-right: 9px; }

/* timeline slicer floating over the sheet */
.slicer { position: absolute; left: 977px; top: 346px; width: 682px; height: 157px; background: #fff; border: 2px solid #666; box-shadow: 0 1px 0 1px #000; padding: 0 6px; font: 13px Roboto, sans-serif; }
.s-head { display: flex; justify-content: space-between; align-items: center; height: 29px; padding-bottom: 2px; border-bottom: 1px solid #000; font-size: 14px; }
.s-head svg { width: 18px; height: 18px; }
.s-period { display: flex; justify-content: space-between; align-items: center; height: 31px; padding-right: 4px; }
.s-period button { color: #808080; gap: 8px; font-size: 12px; }
.s-period i { border: 4px solid transparent; border-top: 5px solid #a5a5a5; border-bottom: 0; }
.s-year { line-height: 22px; color: #808080; }
.months { display: grid; grid-template-columns: 31fr 28fr 31fr 30fr 31fr 30fr 31fr 31fr 30fr 31fr 30fr 31fr; width: 575px; color: #808080; font-size: 12px; }
.months button { flex-direction: column; align-items: stretch; text-align: left; line-height: 26px; }
.months button::after { content: ""; height: 19px; background: linear-gradient(#999, #757575 50%, #000); border-right: 1px solid #595959; }
.s-scroll { display: flex; align-items: center; margin-top: 8px; }
.s-scroll button { width: 17px; height: 18px; border: 1px solid #b5b5b5; }
.s-scroll svg { width: 14px; height: 14px; }
.s-scroll i { flex: 1; height: 8px; background: #e5e5e5; margin: 0 2px; }
.h { position: absolute; width: 14px; height: 14px; border: 2px solid #666; border-radius: 50%; background: #fff; transform: translate(-50%, -50%); }
.tl, .tc, .tr { top: -1px; }
.ml, .mr { top: 50%; }
.bl, .bc, .br { top: calc(100% + 1px); }
.tl, .ml, .bl { left: -1px; }
.tc, .bc { left: 50%; }
.tr, .mr, .br { left: calc(100% + 1px); }

.vscroll { width: 16px; margin: 0 3px 0 6px; background: #141414; border-radius: 8px; display: flex; flex-direction: column; align-items: center; padding: 4px 0; gap: 5px; }
.vscroll svg { width: 10px; height: 12px; }
.vscroll i { flex: 1; width: 10px; border-radius: 5px; background: #999; }

/* sheet tabs */
.tabs { height: 28px; display: flex; align-items: center; padding-left: 16px; font-size: 16px; }
.tabnav { width: 88px; height: 28px; background: #232323; display: flex; align-items: center; }
.tabnav button { flex: 1; }
.tabnav svg { width: 10px; height: 10px; }
.tab { height: 24px; padding: 0 11px 5px; background: #232323; border: 2px solid #090909; border-width: 0 2px; box-shadow: -1px 0 0 #777; margin-right: 1px; }
.tab.red { background: #f00; padding: 0 12px 5px; }
.tab.active { height: 26px; background: #fff; color: #1e7145; font-weight: 700; border: 0; border-bottom: 3px solid #1e7145; box-shadow: none; padding: 0 12px 3px; align-self: flex-start; margin: 0; }
.add { width: 58px; height: 28px; background: #232323; padding-left: 28px; }
.add svg { width: 20px; height: 20px; }
.tabs .dots { margin: 0 13px 0 auto; }
.hscroll { width: 546px; height: 21px; margin-right: 23px; background: #141414; border-radius: 10px; display: flex; align-items: center; gap: 5px; padding: 0 5px; }
.hscroll svg { width: 11px; height: 12px; }
.hscroll i { flex: 1; height: 11px; border-radius: 5px; background: #999; }

/* status bar */
.status { height: 26px; background: #141414; border-top: 1px solid #3a3a3a; display: flex; align-items: center; font-size: 12px; padding: 0 17px 0 13px; }
.access { margin-left: 26px; gap: 4px; }
.access svg { width: 18px; height: 18px; }
.views { display: flex; margin: 0 1px 0 auto; }
.views button { width: 50px; height: 25px; }
.views .sel { background: #232323; }
.views svg { width: 18px; height: 18px; }
.z { width: 20px; font-size: 18px; }
.zoom { appearance: none; width: 126px; height: 16px; }
.zoom::-webkit-slider-runnable-track { height: 14px; background: linear-gradient(#a5a5a5, #a5a5a5) 0 50% / 100% 1px no-repeat; }
.zoom::-webkit-slider-thumb { appearance: none; width: 6px; height: 14px; background: #a5a5a5; }
.pct { width: 36px; text-align: right; }
```
